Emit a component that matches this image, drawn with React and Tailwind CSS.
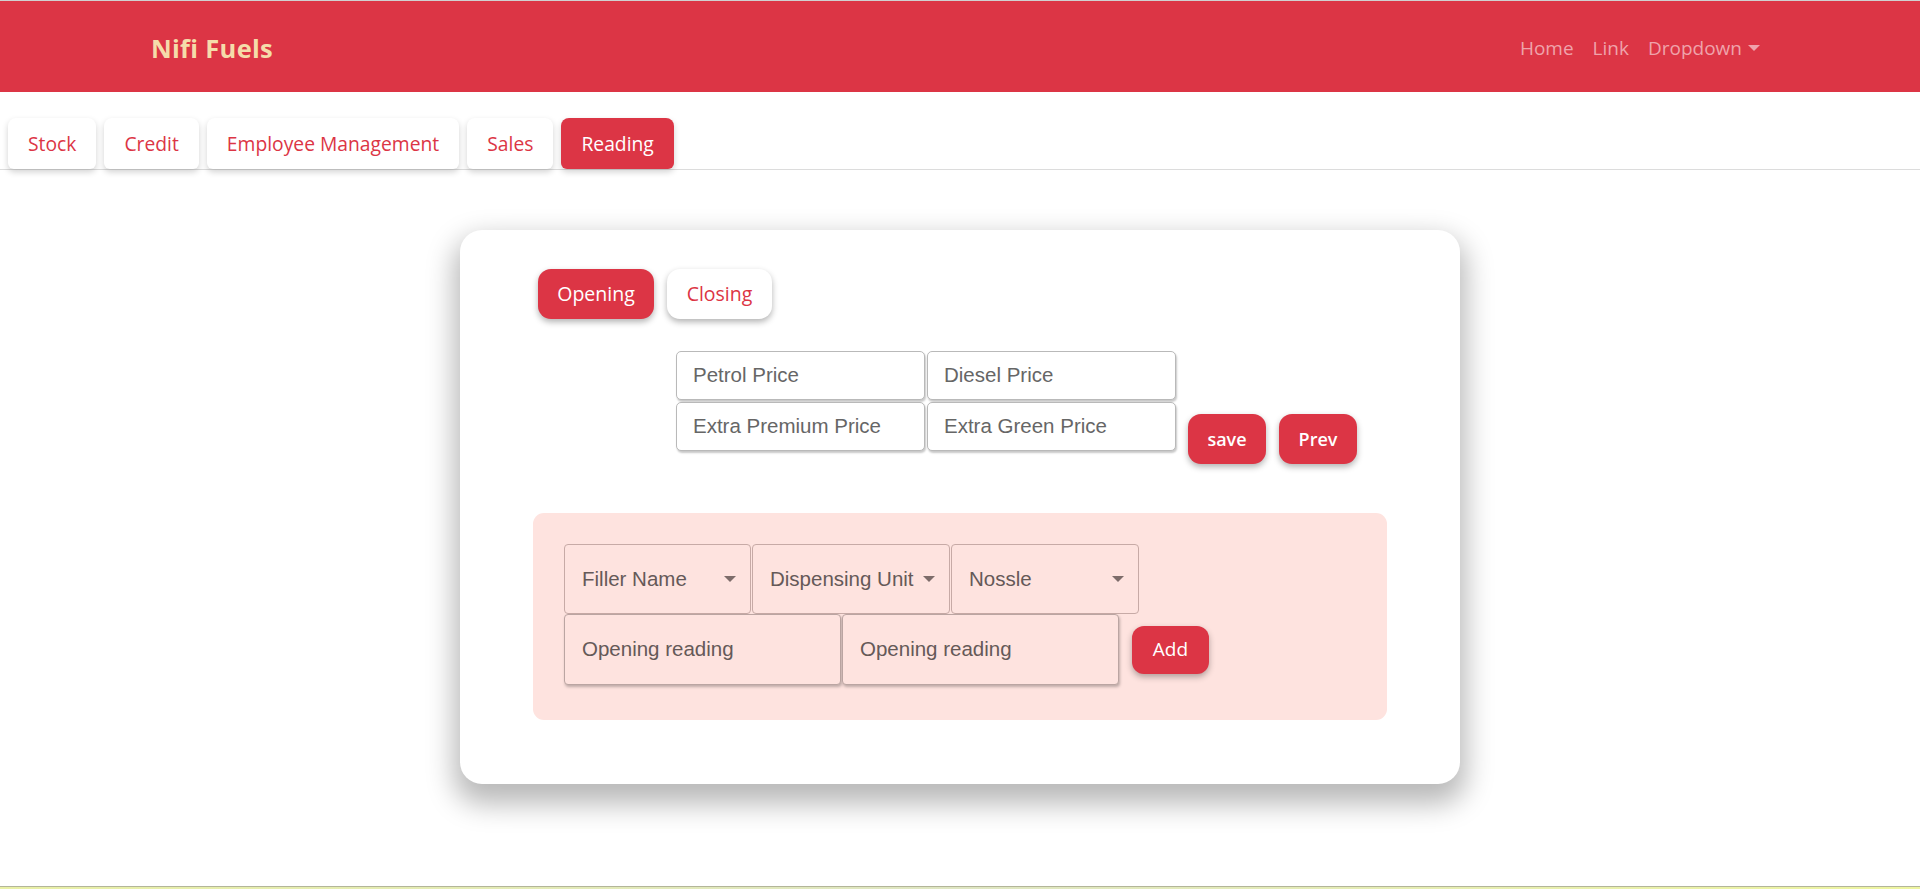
import React from "react";

const seg = { fontFamily: '"Open Sans", "Noto Sans", sans-serif' };
const ari = { fontFamily: '"Liberation Sans", Arial, sans-serif' };

function Tab({ label, active }) {
  return (
    <div
      style={seg}
      className={
        "h-[51px] flex items-center pt-[2px] px-[20px] rounded-t-[8px] rounded-b-[6px] text-[19.3px] shadow-[0_3px_6px_rgba(0,0,0,0.18)] " +
        (active ? "bg-[#dc3545] text-white" : "bg-white text-[#dc3545]")
      }
    >
      {label}
    </div>
  );
}

function PriceInput({ label }) {
  return (
    <div
      style={ari}
      className="w-[249px] h-[49px] bg-white border border-[#b9b9b9] rounded-[5px] shadow-[1px_2px_2px_rgba(0,0,0,0.22)] flex items-center pl-[16px] text-[20.5px] text-[#666]"
    >
      {label}
    </div>
  );
}

function Select({ label, w }) {
  return (
    <div
      style={ari}
      className={
        "h-[70px] bg-[#fee3df] border border-[#c7aaa6] rounded-[4px] flex items-center justify-between pl-[17px] pr-[14px] text-[20.5px] text-[#655958] " +
        w
      }
    >
      <span>{label}</span>
      <span className="w-0 h-0 border-t-[6px] border-t-[#7d6c6a] border-x-[6px] border-x-transparent" />
    </div>
  );
}

function ReadingInput() {
  return (
    <div
      style={ari}
      className="w-[277px] h-[71px] bg-[#fee3df] border border-[#bba5a2] rounded-[4px] shadow-[1px_2px_3px_rgba(0,0,0,0.25)] flex items-center pl-[17px] pb-[1px] text-[20.5px] text-[#655958]"
    >
      Opening reading
    </div>
  );
}

export default function App() {
  return (
    <div className="min-h-[889px] bg-white flex flex-col">
      <div className="h-[1px] bg-[#d0d0d0]" />
      <nav className="h-[91px] bg-[#dc3545] flex items-center justify-between pt-[3px] pl-[151px] pr-[160px]">
        <span style={seg} className="text-[25.5px] font-bold text-[#f5dcaa] tracking-[0.3px]">
          Nifi Fuels
        </span>
        <div style={seg} className="flex items-center gap-[19px] text-[19px] text-[#efa3ab]">
          <span>Home</span>
          <span>Link</span>
          <span className="flex items-center gap-[6px]">
            Dropdown
            <span className="w-0 h-0 border-t-[6px] border-t-[#efa3ab] border-x-[6px] border-x-transparent" />
          </span>
        </div>
      </nav>

      <div className="mt-[26px] flex items-end gap-[8px] pl-[8px] border-b border-[#dcdcdc]">
        <Tab label="Stock" />
        <Tab label="Credit" />
        <Tab label="Employee Management" />
        <Tab label="Sales" />
        <Tab label="Reading" active />
      </div>

      <div className="flex justify-center pt-[60px]">
        <div className="w-[1000px] h-[554px] bg-white rounded-[22px] shadow-[0_14px_28px_6px_rgba(0,0,0,0.28)] pt-[39px] flex flex-col">
          <div className="flex gap-[13px] pl-[78px]">
            <button
              style={seg}
              className="h-[50px] w-[116px] rounded-[13px] bg-[#dc3545] text-white text-[19.5px] shadow-[0_3px_6px_rgba(0,0,0,0.3)]"
            >
              Opening
            </button>
            <button
              style={seg}
              className="h-[50px] w-[105px] rounded-[13px] bg-white text-[#dc3545] text-[19.5px] shadow-[0_3px_6px_rgba(0,0,0,0.3)]"
            >
              Closing
            </button>
          </div>

          <div className="flex items-end pl-[216px] mt-[32px]">
            <div className="grid grid-cols-2 gap-[2px] w-[500px]">
              <PriceInput label="Petrol Price" />
              <PriceInput label="Diesel Price" />
              <PriceInput label="Extra Premium Price" />
              <PriceInput label="Extra Green Price" />
            </div>
            <div className="flex gap-[13px] ml-[12px] mb-[-13px]">
              <button
                style={seg}
                className="h-[50px] w-[78px] rounded-[13px] bg-[#dc3545] text-white text-[18px] font-semibold shadow-[0_3px_6px_rgba(0,0,0,0.3)]"
              >
                save
              </button>
              <button
                style={seg}
                className="h-[50px] w-[78px] rounded-[13px] bg-[#dc3545] text-white text-[18px] font-semibold shadow-[0_3px_6px_rgba(0,0,0,0.3)]"
              >
                Prev
              </button>
            </div>
          </div>

          <div className="mx-[73px] mt-[62px] h-[207px] rounded-[11px] bg-[#fee3df] pt-[31px] pl-[31px]">
            <div className="flex gap-[1px]">
              <Select label="Filler Name" w="w-[187px]" />
              <Select label="Dispensing Unit" w="w-[198px]" />
              <Select label="Nossle" w="w-[188px]" />
            </div>
            <div className="flex items-center gap-[1px]">
              <ReadingInput />
              <ReadingInput />
              <button
                style={seg}
                className="ml-[12px] h-[48px] w-[77px] rounded-[12px] bg-[#dc3545] text-white text-[19px] shadow-[0_3px_6px_rgba(0,0,0,0.3)]"
              >
                Add
              </button>
            </div>
          </div>
        </div>
      </div>

      <div className="mt-auto h-[3px] border-t border-[#b3b59a] bg-gradient-to-r from-[#e9f0a6] via-[#dfe6c2] to-[#eef5a0]" />
    </div>
  );
}
